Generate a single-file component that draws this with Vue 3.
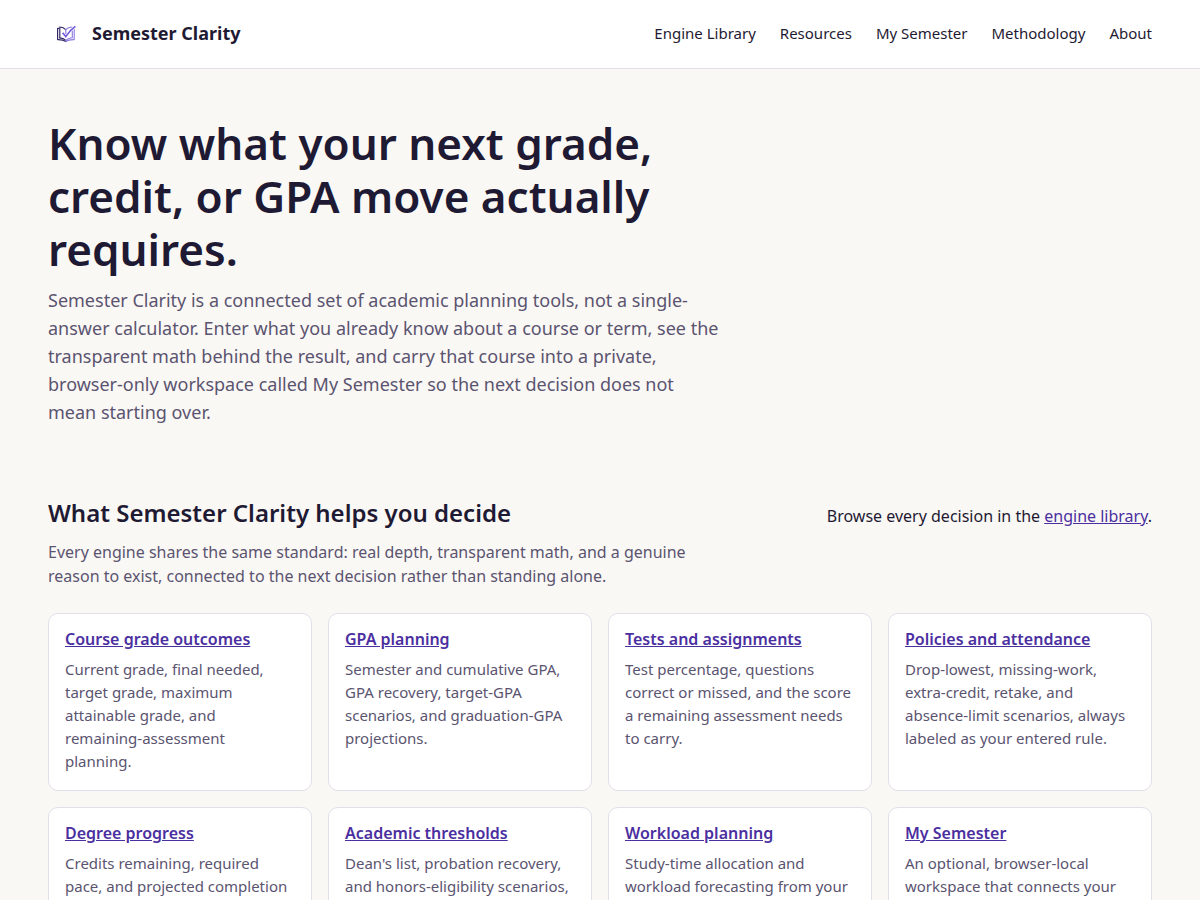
<script setup>
const navLinks = ['Engine Library', 'Resources', 'My Semester', 'Methodology', 'About']

const topics = [
  { title: 'Course grade outcomes', text: 'Current grade, final needed, target grade, maximum attainable grade, and remaining-assessment planning.' },
  { title: 'GPA planning', text: 'Semester and cumulative GPA, GPA recovery, target-GPA scenarios, and graduation-GPA projections.' },
  { title: 'Tests and assignments', text: 'Test percentage, questions correct or missed, and the score a remaining assessment needs to carry.' },
  { title: 'Policies and attendance', text: 'Drop-lowest, missing-work, extra-credit, retake, and absence-limit scenarios, always labeled as your entered rule.' },
  { title: 'Degree progress', text: 'Credits remaining, required pace, and projected completion' },
  { title: 'Academic thresholds', text: "Dean's list, probation recovery, and honors-eligibility scenarios," },
  { title: 'Workload planning', text: 'Study-time allocation and workload forecasting from your' },
  { title: 'My Semester', text: 'An optional, browser-local workspace that connects your' },
]
</script>

<template>
  <div class="page">
    <header class="site-header">
      <a class="brand" href="#">
        <svg class="logo" viewBox="0 0 36 36" fill="none" aria-hidden="true">
          <g stroke="#352b68" stroke-width="1.2" stroke-linejoin="round" stroke-linecap="round">
            <path d="M11 13.400H9.600V24.600C13 24.500 15.600 24.900 17.800 26.500" />
            <path d="M11.800 22.800V12C14.200 12.100 16.200 12.900 17.800 14.600" />
            <path d="M11.800 22.800C14.200 22.900 16.200 23.700 17.800 25.300" />
          </g>
          <g stroke="#8b7be0" stroke-width="1.1" stroke-linejoin="round" stroke-linecap="round">
            <path d="M17.800 14.600C19.300 13 21.300 12.100 23.800 12" />
            <path d="M17.800 14.600V18.500" />
            <path d="M24.300 16V22.800C21.600 22.900 19.500 23.700 17.800 25.300" />
            <path d="M26.200 14.500V24.600C22.700 24.500 20 24.900 17.800 26.500" />
          </g>
          <path d="M14.600 17.800L17.800 21.600C20.100 17.700 23.200 14.200 27.400 11.400" stroke="#7257dc" stroke-width="1.600" />
        </svg>
        <span>Semester Clarity</span>
      </a>
      <nav class="nav" aria-label="Primary">
        <a v-for="link in navLinks" :key="link" href="#">{{ link }}</a>
      </nav>
    </header>

    <main>
      <section class="hero">
        <h1>Know what your next grade, credit, or GPA move actually requires.</h1>
        <p>
          Semester Clarity is a connected set of academic planning tools, not a single-answer
          calculator. Enter what you already know about a course or term, see the transparent
          math behind the result, and carry that course into a private, browser-only workspace
          called My Semester so the next decision does not mean starting over.
        </p>
      </section>

      <section>
        <div class="section-head">
          <h2>What Semester Clarity helps you decide</h2>
          <p>Browse every decision in the <a href="#">engine library</a>.</p>
        </div>
        <p class="intro">
          Every engine shares the same standard: real depth, transparent math, and a genuine
          reason to exist, connected to the next decision rather than standing alone.
        </p>
        <div class="cards">
          <article v-for="topic in topics" :key="topic.title" class="card">
            <h3><a href="#">{{ topic.title }}</a></h3>
            <p>{{ topic.text }}</p>
          </article>
        </div>
      </section>
    </main>
  </div>
</template>

<style>
body {
  margin: 0;
  background: #faf8f5;
}
</style>

<style scoped>
.page {
  color: #1f1a33;
  font-family: "Noto Sans", sans-serif;
  font-size: 16px;
  line-height: 24px;
}

h1,
h2,
h3,
p {
  margin: 0;
}

.site-header {
  display: flex;
  align-items: center;
  justify-content: space-between;
  padding: 15px 48px 17px;
  background: #fff;
  border-bottom: 1px solid #e2dfea;
}

.brand {
  display: flex;
  align-items: center;
  gap: 8px;
  color: inherit;
  font-size: 18px;
  font-weight: 700;
  text-decoration: none;
}

.logo {
  width: 36px;
  height: 36px;
}

.nav {
  display: flex;
  gap: 24px;
  font-size: 15px;
}

.nav a {
  color: inherit;
  text-decoration: none;
}

main {
  padding: 48px;
}

.hero {
  max-width: 672px;
  margin-bottom: 72px;
}

h1 {
  margin-bottom: 10px;
  font-size: 44px;
  font-weight: 600;
  line-height: 53px;
}

.hero p {
  color: #5a5470;
  font-size: 18px;
  line-height: 28px;
}

.section-head {
  display: flex;
  align-items: baseline;
  justify-content: space-between;
  gap: 16px;
  margin-bottom: 12px;
}

h2 {
  font-size: 24px;
  font-weight: 600;
  line-height: 30px;
}

.section-head a,
.card a {
  color: #4b2fa0;
}

.intro {
  max-width: 672px;
  margin-bottom: 25px;
  color: #5a5470;
}

.cards {
  display: grid;
  grid-template-columns: repeat(4, 1fr);
  gap: 16px;
}

.card {
  padding: 15px 16px 17px;
  background: #fff;
  border: 1px solid #e2dfea;
  border-radius: 10px;
}

h3 {
  margin-bottom: 9px;
  font-size: 16px;
  font-weight: 600;
  line-height: 20px;
}

.card p {
  color: #5a5470;
  font-size: 15px;
  line-height: 23px;
}
</style>
